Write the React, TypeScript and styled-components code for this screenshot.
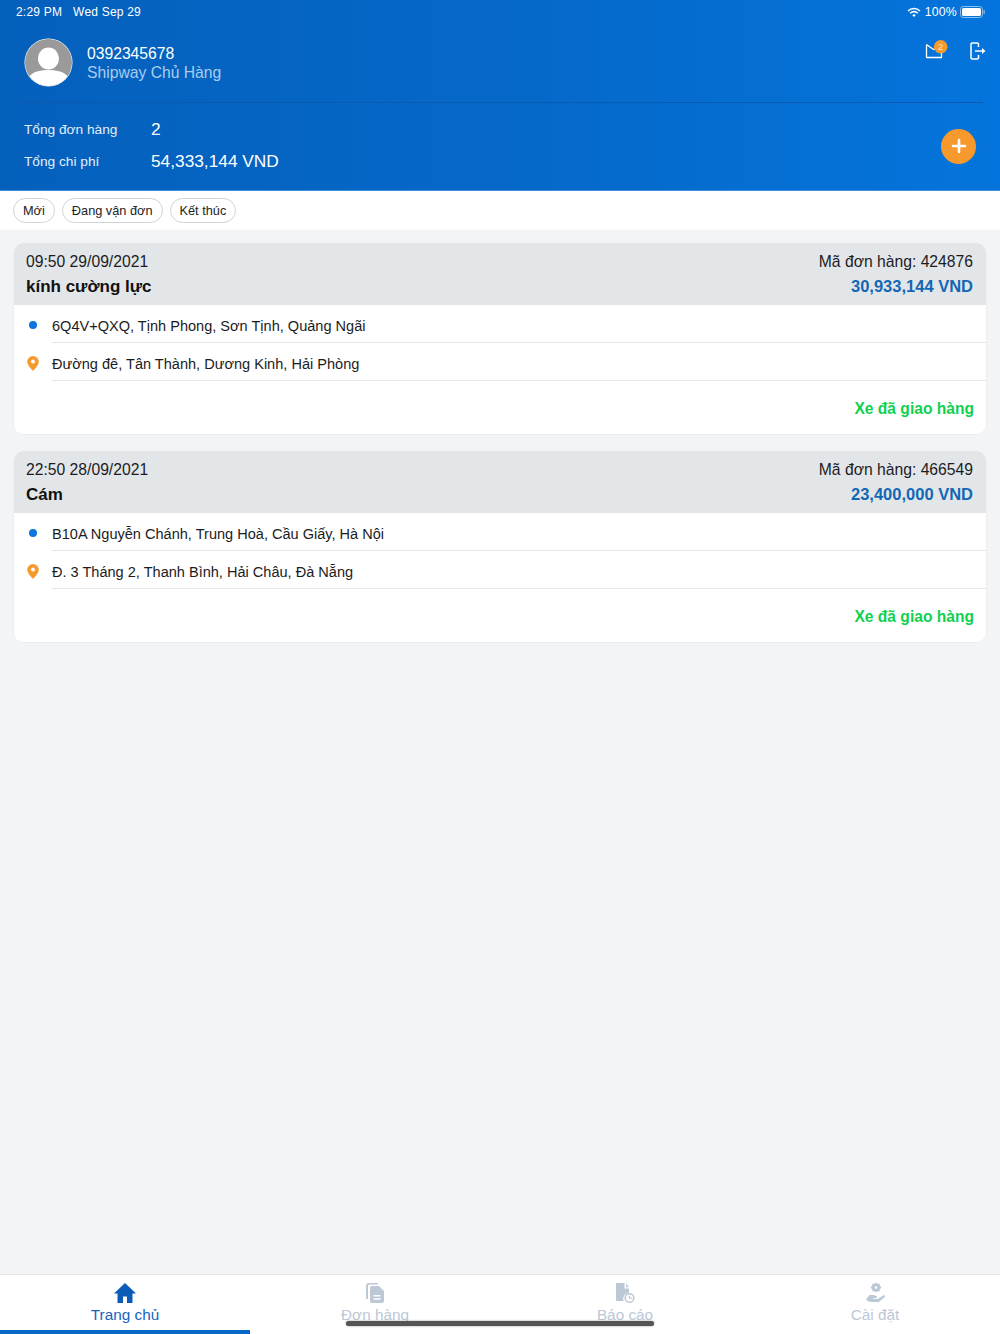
import styled, { createGlobalStyle } from "styled-components";

const GlobalStyle = createGlobalStyle`
  html, body { margin: 0; padding: 0; }
  body { font-family: "Liberation Sans", Arial, sans-serif; background: #f3f4f6; }
  * { box-sizing: border-box; }
`;

const Page = styled.div`
  position: relative;
  width: 1000px;
  height: 1334px;
  display: flex;
  flex-direction: column;
  overflow: hidden;
  background: #f3f4f6;
`;

const Header = styled.header`
  height: 191px;
  padding: 0 17px 0 18px;
  color: #fff;
  background: linear-gradient(90deg, #0560bc 0%, #0568c8 50%, #0474dc 100%);
  border-bottom: 1px solid #3d8fdc;
`;

const StatusBar = styled.div`
  height: 24px;
  margin: 0 -2px;
  display: flex;
  align-items: center;
  justify-content: space-between;
  font-size: 12px;
  letter-spacing: 0.2px;
`;

const StatusGroup = styled.div`
  display: flex;
  align-items: center;
  gap: 4px;
`;

const StatusDate = styled.span`
  margin-left: 7px;
`;

const BatteryText = styled.span`
  font-size: 12.3px;
  margin-right: -1px;
`;

const Profile = styled.div`
  height: 79px;
  padding: 14px 0 0 6px;
  display: flex;
  align-items: flex-start;
  gap: 14px;
  border-bottom: 1px solid #0a5bb0;
`;

const Avatar = styled.svg`
  width: 49px;
  height: 49px;
  flex: none;
`;

const ProfileText = styled.div`
  padding-top: 7px;
  flex: 1;
`;

const Phone = styled.div`
  font-size: 15.7px;
  line-height: 18px;
`;

const Role = styled.div`
  font-size: 15.7px;
  line-height: 19px;
  color: #a9cdf0;
`;

const HeaderActions = styled.div`
  display: flex;
  align-items: flex-start;
  gap: 21px;
  margin: 4px -3px 0 0;
`;

const Stats = styled.div`
  display: flex;
  align-items: center;
  justify-content: space-between;
  padding: 10px 7px 0 6px;
`;

const StatRow = styled.div`
  height: 32px;
  display: flex;
  align-items: center;
`;

const StatLabel = styled.span`
  width: 127px;
  font-size: 13.7px;
  color: #e4effa;
`;

const StatValue = styled.span`
  font-size: 17.3px;
`;

const AddButton = styled.div`
  width: 35px;
  height: 35px;
  margin-top: 2px;
  border-radius: 50%;
  background: #f7992c;
  display: flex;
  align-items: center;
  justify-content: center;
`;

const Filters = styled.nav`
  height: 39px;
  background: #fff;
  padding: 0 13px;
  display: flex;
  align-items: center;
  gap: 7px;
`;

const FilterChip = styled.span`
  height: 25px;
  padding: 0 9px;
  display: flex;
  align-items: center;
  border: 1px solid #d2d4d7;
  border-radius: 13px;
  font-size: 12.75px;
  color: #222;
`;

const Main = styled.main`
  flex: 1;
  padding: 13px 13px 0;
  display: flex;
  flex-direction: column;
  gap: 16px;
`;

const Card = styled.article`
  height: 192px;
  background: #fff;
  border-radius: 10px;
  border: 1px solid #eceef0;
  border-top: 0;
  overflow: hidden;
`;

const CardHead = styled.div`
  height: 62px;
  padding: 8px 14px 0 13px;
  background: #e3e6e9;
  margin: 0 -1px;
`;

const HeadLine = styled.div`
  display: flex;
  justify-content: space-between;
  font-size: 15.7px;
  line-height: 21px;
  color: #1c1c1e;
`;

const OrderName = styled.span`
  font-size: 17px;
  line-height: 30px;
  font-weight: 700;
  color: #111;
`;

const OrderPrice = styled.span`
  font-size: 16.5px;
  line-height: 28px;
  font-weight: 700;
  color: #1367b4;
`;

const AddressRow = styled.div`
  height: 38px;
  display: flex;
`;

const AddressIcon = styled.div`
  width: 38px;
  flex: none;
  display: flex;
  justify-content: center;
  padding: 13px 0 0 0;
`;

const BlueDot = styled.span`
  width: 8px;
  height: 8px;
  margin-top: 3px;
  border-radius: 50%;
  background: #0b76dc;
`;

const AddressText = styled.div`
  flex: 1;
  display: flex;
  align-items: center;
  padding-top: 5px;
  border-bottom: 1px solid #e6e7e9;
  font-size: 14.55px;
  color: #1c1c1e;
`;

const CardFoot = styled.div`
  padding: 18px 12px 0;
  text-align: right;
  font-size: 15.6px;
  line-height: 20px;
  font-weight: 700;
  color: #0fd150;
`;

const TabBar = styled.footer`
  height: 60px;
  display: grid;
  grid-template-columns: repeat(4, 1fr);
  background: #fff;
  border-top: 1px solid #e3e3ea;
`;

const Tab = styled.div<{ $active?: boolean }>`
  padding-top: 6px;
  display: flex;
  flex-direction: column;
  align-items: center;
  font-size: 15.3px;
  line-height: 20px;
  color: ${(p) => (p.$active ? "#1565c0" : "#bcc8d6")};
  border-bottom: 4px solid ${(p) => (p.$active ? "#0568c8" : "transparent")};
`;

const TabIcon = styled.svg`
  width: 24px;
  height: 24px;
`;

const HomeIndicator = styled.div`
  position: absolute;
  left: 346px;
  bottom: 8px;
  width: 308px;
  height: 5px;
  border-radius: 3px;
  background: #555;
  box-shadow: 0 0 2px rgba(60, 60, 60, 0.6);
`;

const orders = [
  {
    time: "09:50 29/09/2021",
    code: "424876",
    name: "kính cường lực",
    price: "30,933,144 VND",
    from: "6Q4V+QXQ, Tịnh Phong, Sơn Tịnh, Quảng Ngãi",
    to: "Đường đê, Tân Thành, Dương Kinh, Hải Phòng",
  },
  {
    time: "22:50 28/09/2021",
    code: "466549",
    name: "Cám",
    price: "23,400,000 VND",
    from: "B10A Nguyễn Chánh, Trung Hoà, Cầu Giấy, Hà Nội",
    to: "Đ. 3 Tháng 2, Thanh Bình, Hải Châu, Đà Nẵng",
  },
];

function App() {
  return (
    <Page>
      <GlobalStyle />
      <Header>
        <StatusBar>
          <StatusGroup>
            <span>2:29 PM</span>
            <StatusDate>Wed Sep 29</StatusDate>
          </StatusGroup>
          <StatusGroup>
            <svg width="14" height="11" viewBox="0 0 14 11" fill="none" stroke="#fff" strokeWidth="1.6">
              <path d="M1 4a8.500 8.500 0 0 1 12 0M3.200 6.200a5.400 5.400 0 0 1 7.600 0" />
              <path d="M5.300 8.200a2.400 2.400 0 0 1 3.400 0L7 10z" fill="#fff" stroke="none" />
            </svg>
            <BatteryText>100%</BatteryText>
            <svg width="25" height="12" viewBox="0 0 25 12" fill="none">
              <rect x="0.5" y="0.5" width="22" height="11" rx="3" stroke="#8fc0ee" />
              <rect x="2" y="2" width="19" height="8" rx="1.6" fill="#fff" />
              <rect x="23.6" y="4" width="1.2" height="4" rx="0.6" fill="#8fc0ee" />
            </svg>
          </StatusGroup>
        </StatusBar>
        <Profile>
          <Avatar viewBox="0 0 49 49">
            <defs>
              <clipPath id="avatar-clip">
                <circle cx="24.5" cy="24.5" r="23.5" />
              </clipPath>
            </defs>
            <circle cx="24.5" cy="24.5" r="24" fill="#fff" />
            <g clipPath="url(#avatar-clip)">
              <circle cx="24.5" cy="24.5" r="24" fill="#9a9a9a" />
              <ellipse cx="24.5" cy="20.500" rx="10.500" ry="11" fill="#fff" />
              <path d="M2 49c0-12 8-17 22.500-17S47 37 47 49z" fill="#fff" />
            </g>
          </Avatar>
          <ProfileText>
            <Phone>0392345678</Phone>
            <Role>Shipway Chủ Hàng</Role>
          </ProfileText>
          <HeaderActions>
            <svg width="24" height="18" viewBox="0 0 24 18" fill="none" overflow="visible">
              <path d="M1.500 2.500L8.500 7.500l6-3M1.500 2.500V15.500H16.500V8" stroke="#fff" strokeWidth="1.300" strokeLinejoin="round" />
              <circle cx="15.700" cy="4.700" r="6.800" fill="#f7992c" />
              <text x="15.700" y="8" textAnchor="middle" fontSize="9.500" fill="#ffe6c8" fontFamily="Liberation Sans, sans-serif">2</text>
            </svg>
            <svg width="16" height="18" viewBox="0 0 16 18" fill="none" stroke="#fff" strokeWidth="1.500">
              <path d="M8.500 5V2.200a1.200 1.200 0 0 0-1.200-1.200H2.200A1.200 1.200 0 0 0 1 2.200v13.600A1.200 1.200 0 0 0 2.200 17h5.100a1.200 1.200 0 0 0 1.200-1.200V13" />
              <path d="M5 9h9" />
              <path d="M12 6l3.500 3-3.500 3z" fill="#fff" stroke="none" />
            </svg>
          </HeaderActions>
        </Profile>
        <Stats>
          <div>
            <StatRow>
              <StatLabel>Tổng đơn hàng</StatLabel>
              <StatValue>2</StatValue>
            </StatRow>
            <StatRow>
              <StatLabel>Tổng chi phí</StatLabel>
              <StatValue>54,333,144 VND</StatValue>
            </StatRow>
          </div>
          <AddButton>
            <svg width="16" height="16" viewBox="0 0 16 16" stroke="#fff" strokeWidth="2.600" strokeLinecap="round">
              <path d="M8 2v12M2 8h12" />
            </svg>
          </AddButton>
        </Stats>
      </Header>
      <Filters>
        <FilterChip>Mới</FilterChip>
        <FilterChip>Đang vận đơn</FilterChip>
        <FilterChip>Kết thúc</FilterChip>
      </Filters>
      <Main>
        {orders.map((order) => (
          <Card key={order.code}>
            <CardHead>
              <HeadLine>
                <span>{order.time}</span>
                <span>Mã đơn hàng: {order.code}</span>
              </HeadLine>
              <HeadLine>
                <OrderName>{order.name}</OrderName>
                <OrderPrice>{order.price}</OrderPrice>
              </HeadLine>
            </CardHead>
            <AddressRow>
              <AddressIcon>
                <BlueDot />
              </AddressIcon>
              <AddressText>{order.from}</AddressText>
            </AddressRow>
            <AddressRow>
              <AddressIcon>
                <svg width="12" height="15" viewBox="0 0 12 15">
                  <path d="M6 0a5.800 5.800 0 0 0-5.800 5.800C.2 9.500 6 15 6 15s5.800-5.500 5.800-9.200A5.800 5.800 0 0 0 6 0z" fill="#f7992c" />
                  <circle cx="6" cy="5.600" r="2" fill="#fff" />
                </svg>
              </AddressIcon>
              <AddressText>{order.to}</AddressText>
            </AddressRow>
            <CardFoot>Xe đã giao hàng</CardFoot>
          </Card>
        ))}
      </Main>
      <TabBar>
        <Tab $active>
          <TabIcon viewBox="0 0 24 24">
            <path d="M12 2L1 12.500h3.500V22h5.500v-6.500h4V22h5.500v-9.500H23z" fill="#0b5cb8" />
          </TabIcon>
          Trang chủ
        </Tab>
        <Tab>
          <TabIcon viewBox="0 0 24 24" fill="#bcc8d6">
            <path d="M6 2h9v1.600H6.500A1.500 1.500 0 0 0 5 5.100V18H4a1 1 0 0 1-1-1V5a3 3 0 0 1 3-3z" />
            <path fillRule="evenodd" d="M9 5h7l5 5v10a2 2 0 0 1-2 2H9a2 2 0 0 1-2-2V7a2 2 0 0 1 2-2zm1.500 9v1.600h7V14zm0 3.200v1.600h7v-1.600z" />
          </TabIcon>
          Đơn hàng
        </Tab>
        <Tab>
          <TabIcon viewBox="0 0 24 24" fill="#bcc8d6">
            <path d="M4 2h7.500v5.500H16v4.200a6.200 6.200 0 0 0-5.500 8.300H4a1 1 0 0 1-1-1V3a1 1 0 0 1 1-1zM13 2.300L16 6.200h-3z" />
            <circle cx="16.500" cy="17" r="4.300" fill="none" stroke="#bcc8d6" strokeWidth="1.600" />
            <path d="M16.500 14.800V17.200h2.200" fill="none" stroke="#bcc8d6" strokeWidth="1.200" />
          </TabIcon>
          Báo cáo
        </Tab>
        <Tab>
          <TabIcon viewBox="0 0 24 24" fill="#bcc8d6">
            <path fillRule="evenodd" d="M13 1.500l1.500 1.300 2-.2.300 2 1.700 1.900-1.700 1.900-.3 2-2-.2L13 11.500l-1.500-1.300-2 .2-.3-2-1.700-1.900 1.700-1.900.3-2 2 .2zm0 3.700a1.300 1.300 0 1 0 0 2.600 1.300 1.300 0 0 0 0-2.600z" />
            <path d="M3 18.500l3.500-4.500h4.500l2.500 1.200c1 .5.700 2-.4 2H10v.8h4.500l5.800-3.500c1.200-.7 2.400.7 1.400 1.600L16 21H7.500l-1.800-.5z" />
          </TabIcon>
          Cài đặt
        </Tab>
      </TabBar>
      <HomeIndicator />
    </Page>
  );
}

export default App;
